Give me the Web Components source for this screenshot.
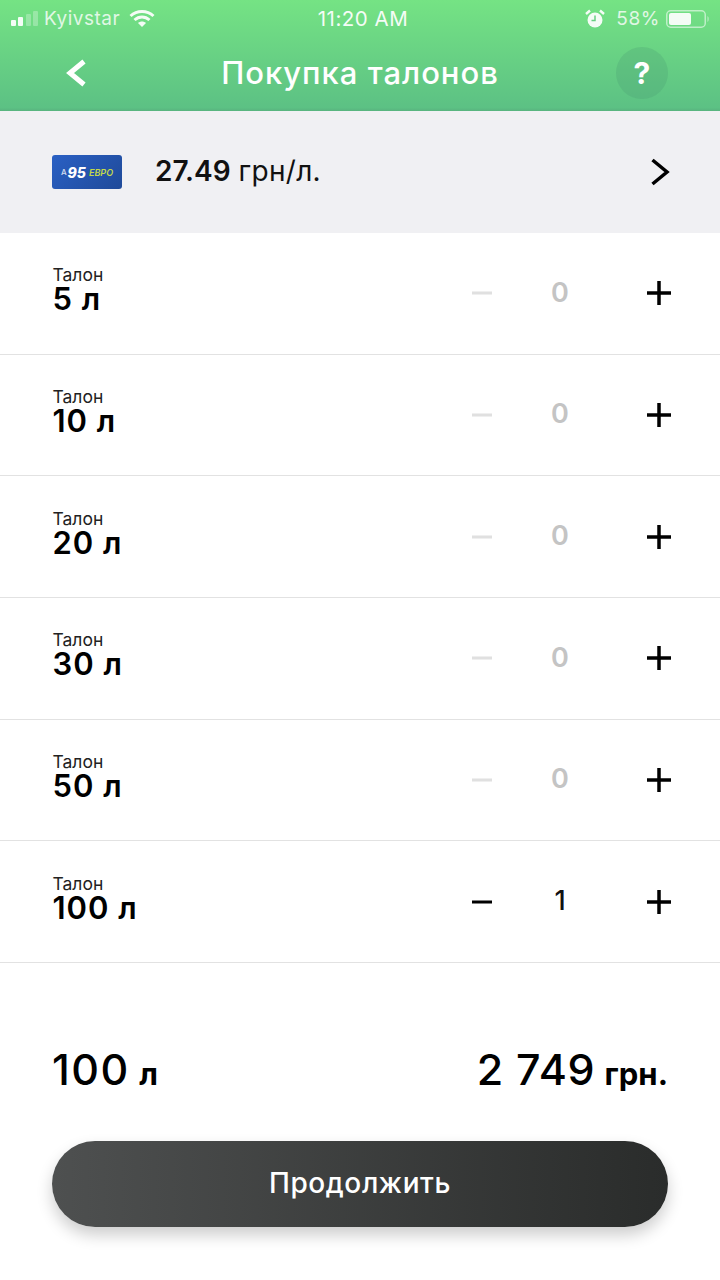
<!DOCTYPE html>
<html>
<head>
<meta charset="utf-8">
<title>Покупка талонов</title>
<style>
  html, body { margin: 0; padding: 0; background: #fff; }
  body { width: 720px; height: 1280px; overflow: hidden; font-family: Inter, "Noto Sans", sans-serif; color: #000; }
</style>
</head>
<body>
<app-header title-text="Покупка талонов"></app-header>
<fuel-picker price="27.49" unit="грн/л."></fuel-picker>
<talon-row liters="5 л" count="0"></talon-row>
<talon-row liters="10 л" count="0"></talon-row>
<talon-row liters="20 л" count="0"></talon-row>
<talon-row liters="30 л" count="0"></talon-row>
<talon-row liters="50 л" count="0"></talon-row>
<talon-row liters="100 л" count="1"></talon-row>
<order-total liters="100" sum="2 749"></order-total>
<main-button>Продолжить</main-button>

<script>
class StatusBar extends HTMLElement {
  constructor() {
    super();
    this.attachShadow({ mode: "open" });
  }
  connectedCallback() {
    this.shadowRoot.innerHTML = `
    <style>
      :host { display: grid; grid-template-columns: 1fr auto 1fr; align-items: center; height: 37px; color: #fff; font-size: 19px; font-family: "Inter", sans-serif; opacity: .93; }
      .left, .right { display: flex; align-items: center; }
      .left { padding-left: 11px; }
      .right { justify-content: flex-end; padding-right: 10px; }
      .carrier { margin: 0 9px 0 5px; letter-spacing: .5px; opacity: .85; }
      .pct { margin: 0 6px 0 11px; opacity: .85; letter-spacing: .6px; }
      .time { letter-spacing: .5px; font-size: 20.500px; padding-left: 6px; }
      svg { display: block; }
    </style>
    <div class="left">
      <svg width="28" height="16" viewBox="0 0 28 16">
        <rect x="0" y="9" width="5" height="6" rx="1" fill="#fff"/>
        <rect x="7" y="6" width="5" height="9" rx="1" fill="#fff"/>
        <rect x="15" y="3" width="5" height="12" rx="1" fill="#fff" opacity=".3"/>
        <rect x="22" y="0" width="5" height="15" rx="1" fill="#fff" opacity=".3"/>
      </svg>
      <span class="carrier">Kyivstar</span>
      <svg width="26" height="19" viewBox="0 0 26 19" fill="none" stroke="#fff" stroke-width="3">
        <path d="M1.5 7C8 1 18 1 24.5 7"/>
        <path d="M5.5 11C10 7 16 7 20.5 11"/>
        <path d="M13 18l-4-4c2.4-2 5.6-2 8 0z" fill="#fff" stroke="none"/>
      </svg>
    </div>
    <div class="time">11:20 AM</div>
    <div class="right">
      <svg width="20" height="20" viewBox="0 0 20 20">
        <circle cx="10" cy="11" r="7.5" fill="#fff"/>
        <path d="M10 6.5V11.5H6.5" fill="none" stroke="#67cf82" stroke-width="1.5"/>
        <path d="M1 5l4-3.5M19 5l-4-3.5" stroke="#fff" stroke-width="2.4"/>
      </svg>
      <span class="pct">58%</span>
      <svg width="44" height="20" viewBox="0 0 44 20">
        <rect x=".75" y="1.75" width="38.5" height="16.5" rx="4" fill="none" stroke="#fff" stroke-opacity=".6" stroke-width="1.5"/>
        <rect x="3" y="4" width="22" height="12" rx="2" fill="#fff"/>
        <path d="M41.5 7c1.5.5 1.5 5.500 0 6z" fill="#fff" opacity=".6"/>
      </svg>
    </div>
    `;
  }
}
customElements.define("status-bar", StatusBar);

class AppHeader extends HTMLElement {
  constructor() {
    super();
    this.attachShadow({ mode: "open" });
  }
  connectedCallback() {
    const title = this.getAttribute("title-text");
    this.shadowRoot.innerHTML = `
    <style>
      :host { display: block; height: 111px; background: linear-gradient(180deg, #75e384 0%, #5cc184 97%, #58b37f 100%); color: #fff; }
      .nav { display: grid; grid-template-columns: 52px 1fr 52px; align-items: center; height: 52px; margin-top: 10px; padding: 0 52px; }
      .back { margin-left: 12px; }
      .title { text-align: center; font-size: 31px; font-weight: 500; letter-spacing: 1px; white-space: nowrap; margin-top: -2px; }
      .help { width: 52px; height: 52px; border-radius: 50%; background: rgba(70,150,110,.25); display: flex; align-items: center; justify-content: center; font-size: 30px; font-weight: 700; }
      svg { display: block; }
    </style>
    <status-bar></status-bar>
    <div class="nav">
      <svg class="back" width="24" height="30" viewBox="0 0 24 30" fill="none" stroke="#fff" stroke-width="5">
        <path d="M20 3.500L6 15L20 26.500"/>
      </svg>
      <div class="title">${title}</div>
      <div class="help">?</div>
    </div>
    `;
  }
}
customElements.define("app-header", AppHeader);

class FuelPicker extends HTMLElement {
  constructor() {
    super();
    this.attachShadow({ mode: "open" });
  }
  connectedCallback() {
    this.shadowRoot.innerHTML = `
    <style>
      :host { display: flex; align-items: center; height: 122px; background: #f0f0f3; padding: 0 52px; box-sizing: border-box; }
      .logo { width: 70px; height: 34px; border-radius: 3px; background: linear-gradient(135deg, #2a60c4, #1f4a99); display: flex; align-items: center; justify-content: center; margin-top: 0; color: #fff; font-style: italic; font-weight: 800; font-size: 14px; white-space: nowrap; }
      .logo i { font-style: normal; font-size: 8px; font-weight: 500; opacity: .8; margin-right: 1px; }
      .logo b { font-size: 9px; font-weight: 600; color: #c4d94a; margin-left: 3px; }
      .price { margin-left: 33px; font-size: 28px; margin-top: -2px; color: #111; letter-spacing: .3px; }
      .price b { font-weight: 600; margin-right: 8px; letter-spacing: 0; }
      .arrow { margin-left: auto; margin-right: -2px; }
      svg { display: block; }
    </style>
    <div class="logo"><i>A</i>95<b>ЕВРО</b></div>
    <div class="price"><b>${this.getAttribute("price")}</b>${this.getAttribute("unit")}</div>
    <svg class="arrow" width="20" height="28" viewBox="0 0 20 28" fill="none" stroke="#000" stroke-width="3.500">
      <path d="M2.500 2L17 14L2.500 26"/>
    </svg>
    `;
  }
}
customElements.define("fuel-picker", FuelPicker);

class TalonRow extends HTMLElement {
  constructor() {
    super();
    this.attachShadow({ mode: "open" });
  }
  connectedCallback() {
    const count = +this.getAttribute("count");
    this.shadowRoot.innerHTML = `
    <style>
      :host { display: flex; align-items: center; height: 121.67px; box-sizing: border-box; border-bottom: 1.500px solid #e2e2e2; padding: 0 48px 0 52.500px; }
      .name { line-height: 1; flex: 1; margin-top: -5px; }
      .small { font-size: 17.500px; color: #222; height: 18px; margin-top: -1px; }
      .big { font-size: 31px; font-weight: 600; line-height: 30px; letter-spacing: 1px; }
      .stepper { display: flex; align-items: center; }
      .minus { margin-right: 45px; }
      .plus { margin-left: 63px; }
      .count { width: 44px; text-align: center; font-size: 27px; margin-top: -2px; margin-left: -1px; margin-right: 1px; }
      .zero { color: #c4c4c4; font-weight: 600; }
      .one { color: #111; font-weight: 500; }
      svg { display: block; }
    </style>
    <div class="name">
      <div class="small">Талон</div>
      <div class="big">${this.getAttribute("liters")}</div>
    </div>
    <div class="stepper">
      <svg class="minus" width="24" height="4" viewBox="0 0 24 4"><rect x="2" y="0.500" width="20" height="3" fill="${count ? "#000" : "#e0e0e0"}"/></svg>
      <div class="count ${count ? "one" : "zero"}">${count}</div>
      <svg class="plus" width="26" height="26" viewBox="0 0 26 26"><path d="M13 1V25M1 13H25" stroke="#000" stroke-width="3.500" fill="none"/></svg>
    </div>
    `;
  }
}
customElements.define("talon-row", TalonRow);

class OrderTotal extends HTMLElement {
  constructor() {
    super();
    this.attachShadow({ mode: "open" });
  }
  connectedCallback() {
    this.shadowRoot.innerHTML = `
    <style>
      :host { display: flex; justify-content: space-between; align-items: baseline; padding: 81px 52px 0 52px; height: 97px; line-height: 50px; font-weight: 500; color: #000; }
      .num { font-size: 43px; letter-spacing: .6px; }
      .unit { font-size: 31px; font-weight: 700; margin-left: 2px; }
      .first { letter-spacing: 1.500px; }
    </style>
    <div><span class="num first">${this.getAttribute("liters")}</span><span class="unit"> л</span></div>
    <div><span class="num">${this.getAttribute("sum")}</span><span class="unit"> грн.</span></div>
    `;
  }
}
customElements.define("order-total", OrderTotal);

class MainButton extends HTMLElement {
  constructor() {
    super();
    this.attachShadow({ mode: "open" });
  }
  connectedCallback() {
    this.shadowRoot.innerHTML = `
    <style>
      :host { display: flex; align-items: center; justify-content: center; height: 86px; margin: 0 52px; padding-bottom: 2px; box-sizing: border-box; border-radius: 43px; background: linear-gradient(90deg, #4e5050, #2a2c2b); box-shadow: 0 8px 16px rgba(0,0,0,.2); color: #fff; font-size: 28px; font-weight: 500; letter-spacing: .6px; }
    </style>
    <slot></slot>
    `;
  }
}
customElements.define("main-button", MainButton);
</script>
</body>
</html>
